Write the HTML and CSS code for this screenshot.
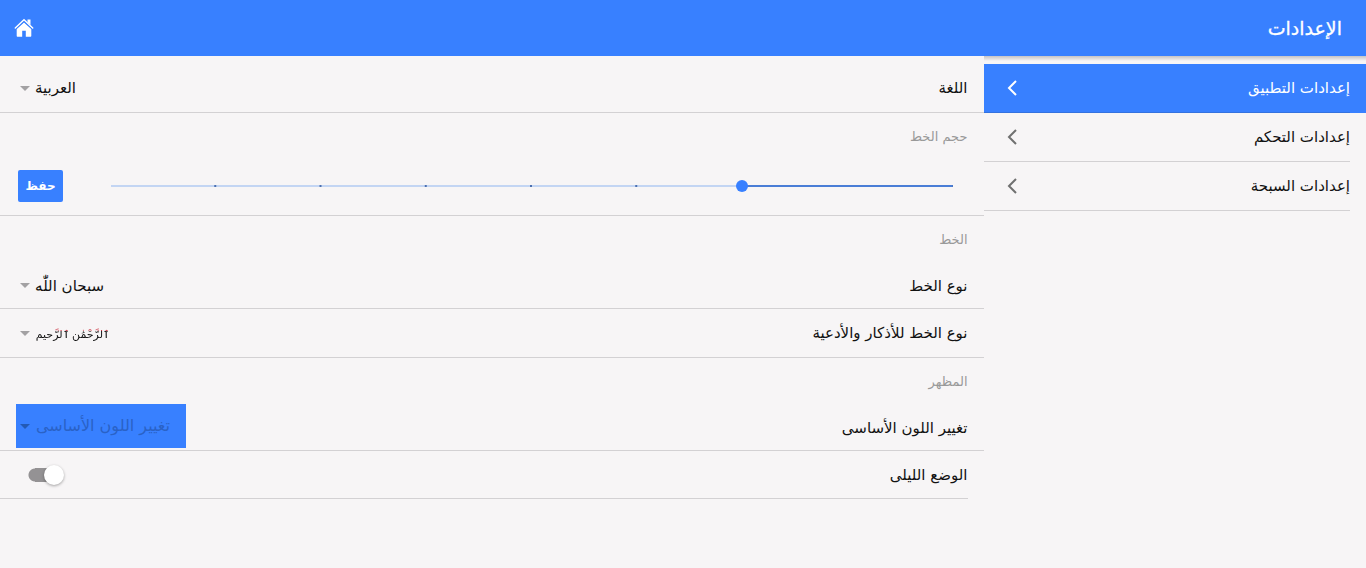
FILE: index.html
```html
<!DOCTYPE html>
<html lang="ar" dir="rtl">
<head>
<meta charset="utf-8">
<meta name="viewport" content="width=device-width, initial-scale=1">
<title>الإعدادات</title>
<link rel="stylesheet" href="styles.css">
</head>
<body>
<header class="toolbar">
  <h1 class="toolbar-title">الإعدادات</h1>
  <button class="home" type="button" aria-label="الرئيسية">
    <svg viewBox="0 0 20 20" width="20" height="20" fill="currentColor"><path d="M10 4.400L2.700 11v6.700c0 .7.400 1.100 1 1.100h4.500V12.800h3.600v6h4.500c.6 0 1-.4 1-1.100V11z"/><path d="M13.500 1.500h3v5.500l-3-2.800z"/><path d="M1.300 10L10 1.800l8.700 8.200" fill="none" stroke="currentColor" stroke-width="1.500" stroke-linecap="round"/><path d="M2 11.100L10 3.600l8 7.500" fill="none" stroke="#3880ff" stroke-width=".7"/></svg>
  </button>
</header>
<div class="layout">
  <nav class="sidebar">
    <a class="nav-item active" href="#app"><span class="nav-inner">إعدادات التطبيق<svg class="chevron" viewBox="0 0 12 18"><path d="M10 2L3 9l7 7"/></svg></span></a>
    <a class="nav-item" href="#control"><span class="nav-inner">إعدادات التحكم<svg class="chevron" viewBox="0 0 12 18"><path d="M10 2L3 9l7 7"/></svg></span></a>
    <a class="nav-item" href="#sebha"><span class="nav-inner">إعدادات السبحة<svg class="chevron" viewBox="0 0 12 18"><path d="M10 2L3 9l7 7"/></svg></span></a>
  </nav>
  <main class="content">
    <div class="row tall">
      <label for="lang">اللغة</label>
      <span class="picker"><select id="lang"><option>العربية</option></select></span>
    </div>
    <h2 class="group"><label for="size">حجم الخط</label></h2>
    <div class="row slider-row">
      <div class="track"><input class="range" id="size" type="range" min="0" max="8" value="2"></div>
      <button class="save" type="button">حفظ</button>
    </div>
    <h2 class="group">الخط</h2>
    <div class="row">
      <label for="font">نوع الخط</label>
      <span class="picker"><select id="font"><option>سبحان اللّٰه</option></select></span>
    </div>
    <div class="row tall">
      <label for="zekr">نوع الخط للأذكار والأدعية</label>
      <span class="picker script"><select id="zekr"><option>ٱلرَّحْمَٰن ٱلرَّحيم</option></select></span>
    </div>
    <h2 class="group">المظهر</h2>
    <div class="row color-row">
      <label for="color">تغيير اللون الأساسى</label>
      <span class="picker primary"><select id="color"><option>تغيير اللون الأساسى</option></select></span>
    </div>
    <div class="row last">
      <label for="night">الوضع الليلى</label>
      <input class="toggle" id="night" type="checkbox" role="switch">
    </div>
  </main>
</div>
</body>
</html>
```
FILE: styles.css
```css
* { box-sizing: border-box; }
body {
  margin: 0;
  min-height: 100vh;
  background: #f7f5f6;
  color: #111;
  font: 15px/24px "DejaVu Sans", sans-serif;
}
button, select { font: inherit; color: inherit; border: 0; cursor: pointer; }
.toolbar {
  height: 56px;
  padding: 0 24px 0 12px;
  display: flex;
  align-items: center;
  justify-content: space-between;
  background: #3880ff;
  color: #fff;
}
.toolbar-title { margin: 0; font-size: 19px; font-weight: 400; -webkit-text-stroke: 0.3px; }
.home { display: flex; padding: 2px; background: none; }
.layout { display: flex; }
.sidebar {
  flex: 0 0 28%;
  padding-top: 8px;
  background: linear-gradient(#c5c3c5, #f7f5f6) top / 100% 5px no-repeat;
}
.nav-item { display: block; padding-right: 16px; color: inherit; text-decoration: none; }
.nav-inner {
  height: 49px;
  padding-left: 22px;
  display: flex;
  align-items: center;
  justify-content: space-between;
  border-bottom: 1px solid #d3d1d3;
}
.nav-item.active { background: #3880ff; color: #fff; }
.active .nav-inner { border-color: #3472df; }
.chevron { width: 12px; height: 18px; fill: none; stroke: #707070; stroke-width: 2; }
.active .chevron { stroke: #fff; }
.content { flex: 1; min-width: 0; padding-top: 8px; }
.row {
  height: 46px;
  padding: 0 16px;
  display: flex;
  align-items: center;
  justify-content: space-between;
  border-bottom: 1px solid #d3d1d3;
}
.tall { height: 49px; }
.group {
  height: 47px;
  margin: 0;
  padding: 0 16px;
  display: flex;
  align-items: center;
  color: #999;
  font-size: 13px;
  font-weight: 400;
}
.slider-row { height: 56px; padding: 0 31px 4px 18px; gap: 48px; }
.track {
  flex: 1;
  height: 2px;
  display: flex;
  align-items: center;
  background:
    linear-gradient(#4a7dd6, #4a7dd6) right / 25% 2px no-repeat,
    linear-gradient(to left, #4c70b0 2px, transparent 2px) left / 12.5% 2px repeat-x,
    #c3d5f3;
}
.range { flex: 1; height: 20px; margin: 0 -6px; appearance: none; background: none; }
.range::-webkit-slider-thumb { appearance: none; width: 12px; height: 12px; border-radius: 50%; background: #3880ff; }
.save {
  width: 45px;
  height: 32px;
  padding: 0;
  border-radius: 2px;
  background: #3880ff;
  color: #fff;
  font-size: 12px;
  font-weight: 700;
}
.picker { height: 44px; padding-left: 4px; display: flex; align-items: center; gap: 5px; }
.picker select { height: 44px; padding: 0; appearance: none; background: none; }
.picker::after {
  content: "";
  border: 5px solid transparent;
  border-top-color: #a3a1a3;
  border-bottom-width: 0;
}
.script select {
  padding-top: 4px;
  background: linear-gradient(#c8202f 20px, #111 20px);
  background-clip: text;
  -webkit-text-fill-color: transparent;
  font-size: 11px;
}
.color-row { align-items: flex-start; }
.color-row label { line-height: 46px; }
.primary { flex-shrink: 0; padding-right: 16px; background: #3880ff; color: #2a62c6; font-size: 16px; }
.color-row .primary { margin-top: -1px; }
.primary::after { border-top-color: #235ab5; }
.last { height: 48px; margin-right: 16px; padding: 0 0 0 28px; }
.toggle {
  width: 36px;
  height: 20px;
  margin: 0;
  appearance: none;
  display: flex;
  align-items: center;
  background:
    radial-gradient(circle at 7px 10px, #949294 6px, transparent 7px) left / 14px 20px no-repeat,
    linear-gradient(#949294, #949294) 7px 3px / 20px 14px no-repeat;
}
.toggle::before {
  content: "";
  width: 20px;
  height: 20px;
  border-radius: 50%;
  background: #fff;
  box-shadow: 0 1px 3px rgba(0, 0, 0, .35);
}
```
